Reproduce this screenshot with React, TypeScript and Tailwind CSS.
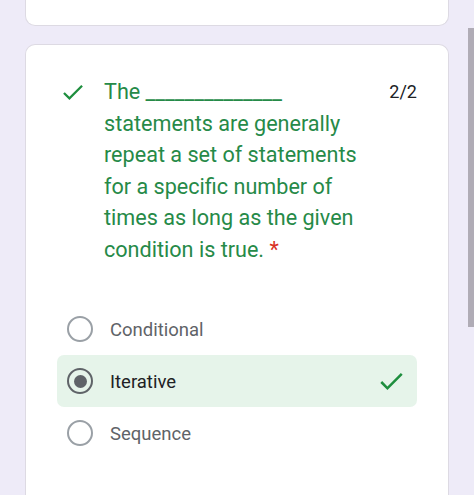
type Option = { label: string; selected?: boolean };

const options: Option[] = [
  { label: "Conditional" },
  { label: "Iterative", selected: true },
  { label: "Sequence" },
];

function CheckMark({ className }: { className: string }) {
  return (
    <svg viewBox="3.4 5.6 17.6 13.4" className={className} fill="currentColor" aria-hidden="true">
      <path d="M9 16.17L4.83 12l-1.42 1.41L9 19 21 7l-1.41-1.41z" />
    </svg>
  );
}

function Radio({ selected }: { selected?: boolean }) {
  if (selected) {
    return (
      <span className="flex h-[26px] w-[26px] shrink-0 items-center justify-center rounded-full border-[2.5px] border-[#5f6368]">
        <span className="h-[13px] w-[13px] rounded-full bg-[#5f6368]" />
      </span>
    );
  }
  return <span className="h-[26px] w-[26px] shrink-0 rounded-full border-[2.5px] border-[#9aa0a6]" />;
}

export default function App() {
  return (
    <div className="relative h-[495px] w-[474px] overflow-hidden bg-[#eeebf8] font-['Roboto',sans-serif]">
      <div className="flex flex-col gap-[18px] px-[25px]">
        <div className="h-[26px] rounded-b-[10px] border border-t-0 border-[#dddae3] bg-white" />

        <div className="h-[470px] rounded-t-[10px] border border-b-0 border-[#dddae3] bg-white px-[31px] pt-[31px]">
          <div className="flex items-start">
            <CheckMark className="mt-[9px] ml-[6px] h-[15px] w-[20px] shrink-0 text-[#1e8e3e]" />
            <p className="ml-[21px] w-[276px] text-[21.6px] leading-[31.5px] text-[#268a48]">
              The ______________ statements are generally repeat a set of statements for a specific number of times as long
              as the given condition is true. <span className="text-[#d93025]">*</span>
            </p>
            <span className="ml-auto mt-[4px] text-[18px] leading-[24px] text-[#202124]">2/2</span>
          </div>

          <div className="mt-[38px] flex flex-col">
            {options.map((o) => (
              <div
                key={o.label}
                className={`flex h-[52px] items-center rounded-[7px] pl-[10px] pr-[14px] ${
                  o.selected ? "bg-[#e6f4ea]" : ""
                }`}
              >
                <Radio selected={o.selected} />
                <span
                  className={`ml-[17px] mt-[4px] text-[18.5px] ${o.selected ? "text-[#202124]" : "text-[#5f6368]"}`}
                >
                  {o.label}
                </span>
                {o.selected && <CheckMark className="ml-auto h-[17px] w-[23px] text-[#1e8e3e]" />}
              </div>
            ))}
          </div>
        </div>
      </div>

      <div className="absolute right-0 top-[28px] h-[299px] w-[6px] bg-[#b0acb6]" />
    </div>
  );
}
